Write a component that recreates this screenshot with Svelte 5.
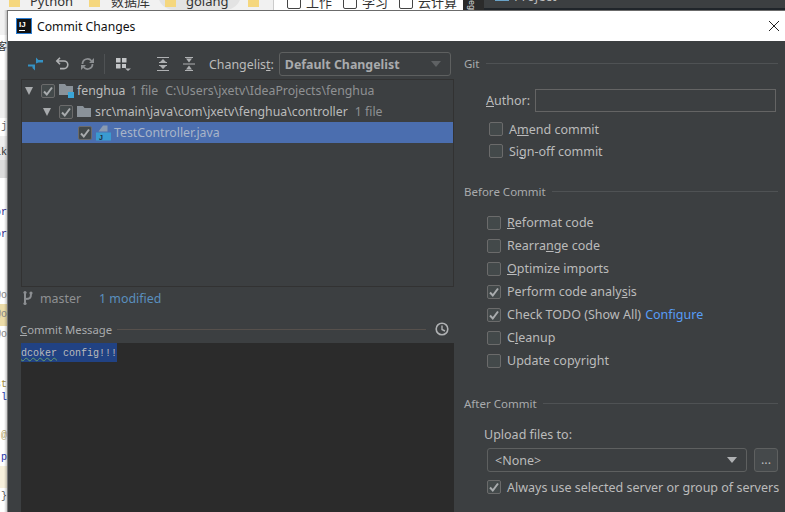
<script>
  const before = [
    { pre: '', u: 'R', post: 'eformat code', on: false },
    { pre: 'Rearra', u: 'n', post: 'ge code', on: false },
    { pre: '', u: 'O', post: 'ptimize imports', on: false },
    { pre: 'Perform code analy', u: 's', post: 'is', on: true },
    { pre: 'Check TODO (Show All)', u: '', post: '', on: true, link: 'Configure' },
    { pre: 'C', u: 'l', post: 'eanup', on: false },
    { pre: '', u: '', post: 'Update copyright', on: false }
  ];
  const strip = [
    { h: 25, bg: '#f1f1f1' },
    { h: 25, bg: '#fff', t: '客', c: '#333' },
    { h: 20, bg: '#fff' },
    { h: 38, bg: '#eeeeee' },
    { h: 18, bg: '#fff', t: 'r.j', c: '#666' },
    { h: 10, bg: '#eeeeee' },
    { h: 14, bg: '#e9e9e9', t: 'lk', c: '#333' },
    { h: 18, bg: '#dcdcdc' },
    { h: 26, bg: '#fff' },
    { h: 18, bg: '#fff', t: 'or', c: '#2b1a8a' },
    { h: 4, bg: '#fff' },
    { h: 18, bg: '#fff', t: 'or', c: '#2b1a8a' },
    { h: 44, bg: '#fff' },
    { h: 16, bg: '#fff', t: '@o', c: '#888' },
    { h: 22, bg: '#ecdca8', t: '@o', c: '#888' },
    { h: 18, bg: '#fff', t: '@o', c: '#888' },
    { h: 34, bg: '#fff' },
    { h: 14, bg: '#fff', t: 'st', c: '#a08a40' },
    { h: 12, bg: '#fff', t: 'l', c: '#2233aa' },
    { h: 24, bg: '#fff' },
    { h: 16, bg: '#fff', t: '@', c: '#b5a56a' },
    { h: 6, bg: '#fff' },
    { h: 16, bg: '#fff', t: 'p', c: '#2233aa' },
    { h: 22, bg: '#f7f0dc' },
    { h: 18, bg: '#fff', t: '}', c: '#555' },
    { h: 6, bg: '#fff' }
  ];
</script>

{#snippet check(on)}
  <span class="cb" class:on>
    {#if on}
      <svg width="14" height="14" viewBox="0 0 14 14"><path d="M3 7.5 L5.8 10.5 L11 3.5" fill="none" stroke="#a9acae" stroke-width="2"/></svg>
    {/if}
  </span>
{/snippet}

<div class="screen">
  <div class="chrome">
    <div class="tabs">
      <span class="tab t1"><i class="fold"></i>Python</span>
      <span class="tab t2"><i class="fold"></i>数据库</span>
      <span class="tab t3"><i class="fold"></i>golang</span>
      <span class="tab t4"><i class="fold"></i></span>
    </div>
    <div class="marks">
      <span><i class="box"></i>工作</span>
      <span><i class="box"></i>学习</span>
      <span><i class="box"></i>云计算</span>
    </div>
    <div class="vtab">eg</div>
    <div class="ide">
      <span class="proj"><i class="pico"></i>Project</span>
    </div>
  </div>
  <div class="lower">
    <div class="edge">
      {#each strip as s}
        <div class="strip" style="height:{s.h}px;background:{s.bg};color:{s.c ?? 'inherit'}">{s.t ?? ''}</div>
      {/each}
    </div>
    <div class="dialog">
      <header class="title">
        <svg class="logo" width="16" height="16" viewBox="0 0 16 16">
          <rect x="0.5" y="0.5" width="15" height="15" fill="#111" stroke="#2d7fd3"/>
          <rect x="3" y="12" width="6" height="1" fill="#fff"/>
          <text x="3" y="9" class="ij">IJ</text>
        </svg>
        <span class="ttl">Commit Changes</span>
        <svg class="close" width="12" height="12" viewBox="0 0 12 12"><path d="M1 1 L11 11 M11 1 L1 11" stroke="#222" stroke-width="1" fill="none"/></svg>
      </header>
      <div class="body">
        <section class="left">
          <div class="toolbar">
            <svg class="ic first" width="15" height="14" viewBox="0 0 15 14"><path d="M8 6.500V0.500L10.500 3H15V5.500H10.500zM7 7.500V13.500L4.500 11V9.500H0V7.500z" fill="#3592c4"/></svg>
            <svg class="ic undo" width="14" height="14" viewBox="0 0 14 14"><path d="M2.500 4h6.500a3.800 3.800 0 0 1 0 7.600H5M5 .8 1.800 4 5 7.200" fill="none" stroke="#afb1b3" stroke-width="1.600"/></svg>
            <svg class="ic redo" width="13" height="14" viewBox="0 0 13 14"><path d="M11.500 7a5 5 0 0 1-9 3M1.500 7a5 5 0 0 1 9-3" fill="none" stroke="#8c8f92" stroke-width="1.800"/><path d="M8 6h5V1zM5 8H0v5z" fill="#8c8f92"/></svg>
            <i class="sep"></i>
            <svg class="ic" width="15" height="14" viewBox="0 0 15 14"><path d="M0 1h4.500v4.500H0zM6 1h4.500v4.500H6zM0 7h4.500v4.500H0zM6 7h4v4H6z" fill="#c4c6c8"/><path d="M9 11.500h6L12 14z" fill="#afb1b3"/></svg>
            <svg class="ic exp" width="12" height="14" viewBox="0 0 12 14"><path d="M0 .5h12M0 13.500h12M2 5.500h8M2 8.500h8" stroke="#afb1b3" fill="none"/><path d="M6 2l3 3H3zM6 12l3-3H3z" fill="#afb1b3"/></svg>
            <svg class="ic col" width="12" height="14" viewBox="0 0 12 14"><path d="M0 7h12" stroke="#afb1b3" fill="none"/><path d="M6 5.500l3-4H3zM6 8.500l3 4H3z" fill="#afb1b3"/><path d="M2 .5h8M2 13.500h8" stroke="#afb1b3" fill="none"/></svg>
            <span class="cl-label">Changelis<u>t</u>:</span>
            <div class="combo cl"><b>Default Changelist</b><i class="arrow dim"></i></div>
          </div>

          <div class="tree">
            <div class="row r1">
              <i class="tri"></i>
              {@render check(true)}
              <svg class="fi" width="16" height="16" viewBox="0 0 16 16"><path d="M0 1h6l1.500 2H14v9H0z" fill="#8a9299"/><rect x="9" y="9" width="6" height="6" fill="#3aa6d8"/></svg>
              <span class="nm">fenghua</span><span class="meta">1 file</span><span class="meta path">C:\Users\jxetv\IdeaProjects\fenghua</span>
            </div>
            <div class="row r2">
              <i class="tri"></i>
              {@render check(true)}
              <svg class="fi" width="16" height="16" viewBox="0 0 16 16"><path d="M0 2h6l1.500 2H14v9H0z" fill="#8a9299"/></svg>
              <span class="nm">src\main\java\com\jxetv\fenghua\controller</span><span class="meta">1 file</span>
            </div>
            <div class="row r3 sel">
              {@render check(true)}
              <svg class="fi" width="16" height="16" viewBox="0 0 16 16"><path d="M7 0.500h4.500v6H2.500z" fill="#8a9ab0"/><rect x="0" y="7.500" width="15" height="8" fill="#3a9bd0"/><text x="3" y="14.500" class="j">J</text></svg>
              <span class="nm file">TestController.java</span>
            </div>
          </div>

          <div class="status">
            <svg width="12" height="16" viewBox="0 0 12 16"><path d="M3 2v12M3 9c5 0 6-1 6-5" fill="none" stroke="#8c8f92" stroke-width="2"/><circle cx="3" cy="2.500" r="1.600" fill="#8c8f92"/><circle cx="3" cy="13.500" r="1.600" fill="#8c8f92"/><circle cx="9" cy="3" r="1.600" fill="#8c8f92"/></svg>
            <span class="branch">master</span>
            <span class="mod">1 modified</span>
          </div>

          <div class="msghead">
            <span><u>C</u>ommit Message</span>
            <i class="rule"></i>
            <svg width="14" height="14" viewBox="0 0 14 14"><circle cx="7" cy="7" r="5.800" fill="none" stroke="#afb1b3" stroke-width="1.600"/><path d="M7 3.500V7.500L10 9" fill="none" stroke="#afb1b3" stroke-width="1.400"/></svg>
          </div>
          <div class="msg"><span class="selected"><span class="typo">dcoker</span> config!!!</span></div>
        </section>

        <section class="right">
          <div class="legend git"><span>Git</span><i></i></div>
          <div class="author">
            <label for="au"><u>A</u>uthor:</label>
            <input id="au" />
          </div>
          <div class="chk c1">{@render check(false)}<span>A<u>m</u>end commit</span></div>
          <div class="chk c1">{@render check(false)}<span>Si<u>g</u>n-off commit</span></div>

          <div class="legend bc"><span>Before Commit</span><i></i></div>
          <div class="opts">
            {#each before as o}
              <div class="chk c2">
                {@render check(o.on)}
                <span>{o.pre}{#if o.u}<u>{o.u}</u>{/if}{o.post}{#if o.link}<a href="#top">{o.link}</a>{/if}</span>
              </div>
            {/each}
          </div>

          <div class="legend ac"><span>After Commit</span><i></i></div>
          <div class="upload">Upload files to:</div>
          <div class="uprow">
            <div class="combo none"><span>&lt;None&gt;</span><i class="arrow"></i></div>
            <div class="more">...</div>
          </div>
          <div class="chk c3">{@render check(true)}<span class="nowrap">Always use selected server or group of servers</span></div>
        </section>
      </div>
    </div>
  </div>
</div>

<style>
  :global(body) { margin: 0; background: #fff; }
  .screen {
    width: 785px; height: 512px; overflow: hidden;
    display: flex; flex-direction: column;
    font-family: "Noto Sans", "Open Sans", "Noto Sans CJK SC", sans-serif;
    font-size: 12.4px; color: #bbbbbb;
  }
  .chrome {
    height: 10px; flex: none; display: flex; overflow: hidden;
    background: #f1f1f1; color: #333; font-size: 13px; line-height: 14px;
  }
  .tabs { width: 273px; flex: none; display: flex; height: 10px; overflow: hidden; }
  .tab { display: inline-flex; white-space: nowrap; margin-top: -6px; gap: 10px; flex: none; height: 16px; }
  .t1 { margin-left: 9px; width: 80px; }
  .t2 { width: 76px; gap: 11px; }
  .t3 { width: 76px; gap: 10px; padding-left: 7px; margin-left: -7px; background: #e3e3e3; border-radius: 0 0 18px 18px; }
  .t4 { margin-left: 7px; }
  .fold { width: 11px; height: 9px; background: #f5d77e; display: inline-block; margin-top: 4px; flex: none; }
  .marks { width: 190px; flex: none; height: 10px; background: #fff; border-left: 1px solid #ccc; display: flex; gap: 11px; padding-left: 13px; box-sizing: border-box; overflow: hidden; }
  .marks span { display: inline-flex; gap: 5px; margin-top: -5px; white-space: nowrap; height: 15px; }
  .box { width: 14px; height: 14px; border: 1px solid #444; border-radius: 2px; display: inline-block; box-sizing: border-box; flex: none; }
  .vtab { width: 21px; flex: none; height: 10px; background: #2b2b2b; color: #ddd; font: 9px/10px "Liberation Sans", sans-serif; overflow: hidden; writing-mode: vertical-rl; padding-right: 7px; box-sizing: border-box; }
  .ide { flex: 1; height: 10px; background: #3c3f41; border-bottom: 2px solid #20252a; box-sizing: border-box; color: #bbb; padding-left: 11px; overflow: hidden; }
  .proj { display: inline-flex; gap: 5px; margin-top: -11px; height: 14px; vertical-align: top; }
  .pico { width: 14px; height: 12px; background: #3d6f8e; border: 1px solid #6aa3c8; box-sizing: border-box; display: inline-block; }
  .lower { flex: 1; display: flex; min-height: 0; }
  .edge { width: 8px; flex: none; position: relative; overflow: hidden; border-right: 1px solid #777; box-sizing: border-box; background: #fff; }
  .edge::after { content: ""; position: absolute; inset: 0 0 0 4px; background: linear-gradient(90deg, rgba(0,0,0,0), rgba(0,0,0,.22)); }
  .strip { display: flex; justify-content: flex-end; align-items: center; overflow: hidden; white-space: nowrap; font: 10px/1 "Liberation Mono", "Noto Sans CJK SC", monospace; }
  .dialog { flex: 1; display: flex; flex-direction: column; min-width: 0; border-top: 1px solid #6b6b6b; }
  .title {
    height: 30px; flex: none; background: #fff; display: flex; align-items: center;
    padding: 0 5px 0 8px; color: #111; font-size: 12.2px;
  }
  .logo { flex: none; }
  .ij { font: bold 8px "Liberation Sans", sans-serif; fill: #fff; }
  .j { font: bold 7px "Liberation Sans", sans-serif; fill: #1c2b3a; }
  .ttl { margin-left: 5px; flex: 1; }
  .body { flex: 1; background: #3c3f41; display: flex; min-height: 0; }
  .left { width: 445px; flex: none; padding-left: 13px; box-sizing: border-box; display: flex; flex-direction: column; }
  .toolbar { height: 38px; flex: none; display: flex; align-items: center; width: 432px; box-sizing: border-box; padding-top: 8px; }
  .ic { flex: none; }
  .first { margin-left: 7px; }
  .undo { margin-left: 12px; }
  .redo { margin-left: 12px; }
  .sep { width: 1px; height: 20px; background: #4f5254; margin: 0 11px 0 10px; flex: none; }
  .exp { margin-left: 26px; }
  .col { margin-left: 14px; }
  .cl-label { margin-left: 14px; white-space: nowrap; }
  .combo {
    border: 1px solid #5e6060; border-radius: 3px; box-sizing: border-box; display: flex; align-items: center; position: relative;
  }
  .cl { margin-left: 5px; width: 172px; height: 24px; padding-left: 5px; }
  .cl b { color: #a9abad; }
  .arrow { position: absolute; right: 9px; top: 50%; margin-top: -3px; border: 5px solid transparent; border-top: 6px solid #afb1b3; border-bottom: 0; width: 0; height: 0; }
  .arrow.dim { border-top-color: #5f6264; }
  .tree {
    width: 433px; height: 208px; flex: none; box-sizing: border-box; border: 1px solid #323232; background: #3c3f41; font-size: 12.3px;
  }
  .row { height: 21px; display: flex; align-items: center; white-space: nowrap; }
  .r1 { padding-left: 3px; }
  .r2 { padding-left: 21px; }
  .r3 { padding-left: 56px; }
  .tri { width: 0; height: 0; border: 4.500px solid transparent; border-top: 8px solid #a8abad; border-bottom: 0; margin-right: 8px; flex: none; }
  .row .cb { margin-right: 4px; }
  .fi { flex: none; margin-right: 2px; }
  .nm { color: #bbb; margin-right: 7px; }
  .r1 .nm { margin-right: 5px; }
  .meta { color: #8f9193; margin-right: 7px; }
  .sel { background: #4b6eaf; }
  .file { color: #a8b4c8; }
  .cb {
    width: 14px; height: 14px; flex: none; box-sizing: border-box; border: 1px solid #6b6b6b; border-radius: 2px; background: #43494a;
    display: inline-flex; align-items: center; justify-content: center; overflow: hidden;
  }
  .cb svg { margin: -1px; flex: none; }
  .status { height: 22px; display: flex; align-items: center; padding-left: 1px; flex: none; }
  .status svg { margin-right: 6px; }
  .branch { color: #8f9193; margin-right: 18px; }
  .mod { color: #5a8fbf; }
  .msghead { height: 28px; width: 433px; display: flex; align-items: center; gap: 5px; flex: none; margin-top: 6px; }
  .msghead span { font-size: 11.300px; color: #a9abad; white-space: nowrap; margin-left: -1px; }
  .rule { flex: 1; height: 1px; background: #56504c; margin-right: 4px; }
  .msghead svg { flex: none; margin-right: 5px; }
  .msg { width: 433px; flex: 1; background: #2b2b2b; font-family: "Liberation Mono", monospace; font-size: 10px; line-height: 19px; color: #bbb; }
  .selected { background: #214283; display: inline-block; height: 19px; line-height: 22px; }
  .typo { text-decoration: underline wavy #659c6b; text-decoration-thickness: 1px; }
  .right { flex: 1; min-width: 0; padding-left: 11px; box-sizing: border-box; font-size: 12.5px; }
  .legend { display: flex; align-items: center; gap: 6px; font-size: 11.500px; color: #a9abad; height: 16px; margin-right: 7px; white-space: nowrap; }
  .legend i { flex: 1; height: 1px; background: #4f5254; }
  .git { margin-top: 14px; }
  .author { display: flex; align-items: center; margin-top: 17px; padding-left: 22px; height: 24px; }
  .author label { width: 49px; flex: none; color: #bbb; padding-top: 1px; }
  .author input {
    width: 241px; height: 23px; box-sizing: border-box; border: 1px solid #646464; background: #3c3f41; padding: 0;
  }
  .chk { display: flex; align-items: center; white-space: nowrap; }
  .c1 { height: 22px; padding-left: 25px; gap: 6px; }
  .author + .c1 { margin-top: 6px; }
  .bc { margin-top: 21px; }
  .opts { margin-top: 12px; }
  .c2 { height: 23px; padding-left: 23px; gap: 6px; }
  .c2 a { color: #589df6; text-decoration: none; margin-left: 4px; }
  .ac { margin-top: 23px; }
  .upload { margin-top: 14px; padding-left: 20px; height: 21px; line-height: 19px; }
  .uprow { display: flex; gap: 7px; padding-left: 23px; margin-top: 2px; }
  .none { width: 260px; height: 24px; padding-left: 7px; }
  .more { width: 24px; height: 24px; box-sizing: border-box; border: 1px solid #5e6060; border-radius: 3px; background: #45494b; text-align: center; line-height: 22px; }
  .c3 { height: 22px; padding-left: 23px; gap: 6px; margin-top: 4px; }
  .nowrap { white-space: nowrap; }
</style>
